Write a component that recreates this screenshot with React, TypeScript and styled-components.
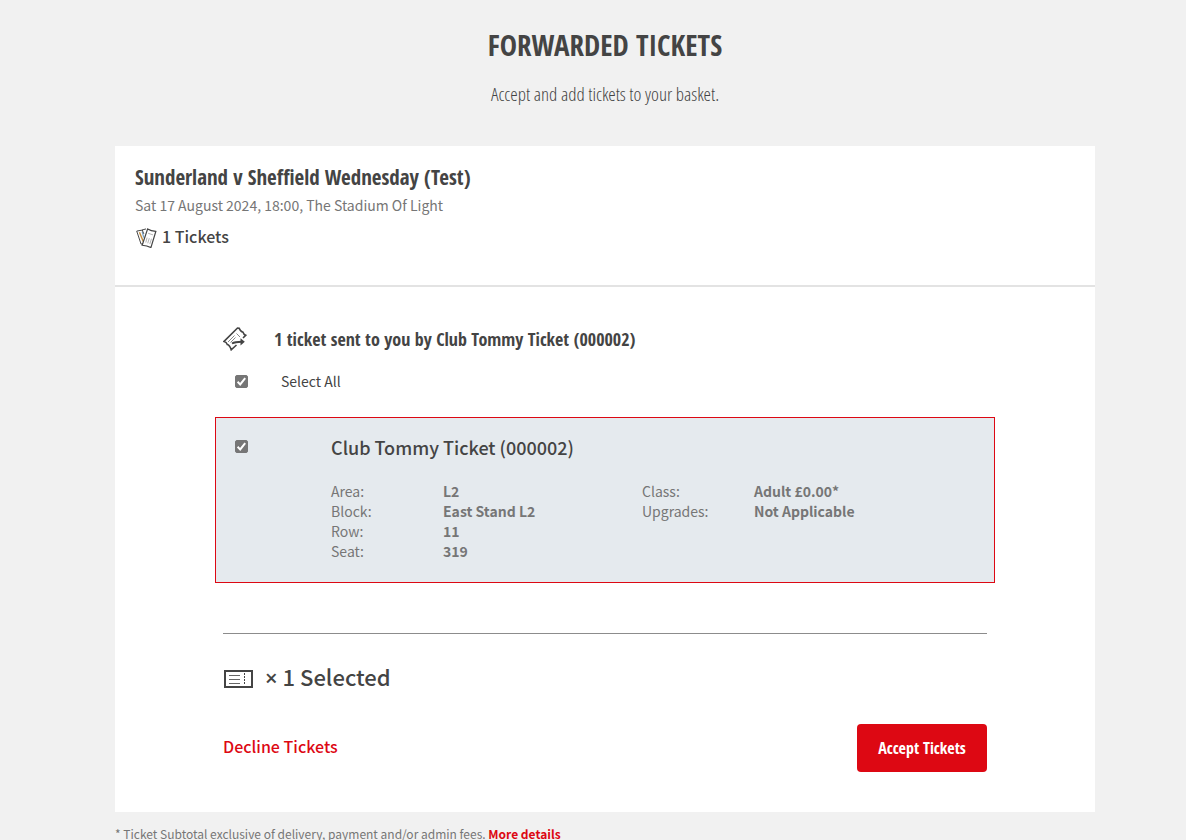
import React, { useState } from "react";
import styled, { createGlobalStyle } from "styled-components";

const ink = "#444444";
const muted = "#767676";
const red = "#dd0813";
const bodyFont = `"Noto Sans CJK JP", "Noto Sans", sans-serif`;
const displayFont = `"Open Sans Condensed", "Roboto Condensed", sans-serif`;
const lightDisplayFont = `"Open Sans Condensed Light", "Roboto Condensed", "Noto Sans Condensed", "Noto Sans CJK JP", sans-serif`;

const GlobalStyle = createGlobalStyle`
  *, *::before, *::after { box-sizing: border-box; }
  body {
    margin: 0;
    background: #f1f1f1;
    color: ${ink};
    font-family: ${bodyFont};
    font-size: 14px;
    line-height: 20px;
  }
  h1, h2, h3, h4, p, dl, dd { margin: 0; }
  svg { flex: none; }
`;

const Page = styled.main`
  padding: 24px 91px 0 115px;
`;

const Intro = styled.header`
  display: flex;
  flex-direction: column;
  align-items: center;
  gap: 16px;
  padding-bottom: 40px;
  text-align: center;
`;

const PageTitle = styled.h1`
  font-family: ${displayFont};
  font-size: 29px;
  line-height: 42px;
  font-weight: 700;
  text-transform: uppercase;
`;

const Lead = styled.p`
  font-family: ${lightDisplayFont};
  font-size: 19px;
  line-height: 24px;
`;

const Card = styled.section`
  background: #ffffff;
`;

const EventHeader = styled.header`
  padding: 15px 20px 37px;
  border-bottom: 2px solid #e3e3e3;
`;

const EventTitle = styled.h2`
  font-family: ${displayFont};
  font-size: 21px;
  line-height: 32px;
  font-weight: 700;
`;

const EventMeta = styled.p`
  color: ${muted};
  line-height: 24px;
`;

const TicketCount = styled.p`
  display: flex;
  align-items: center;
  gap: 5px;
  padding-top: 7px;
  font-size: 16px;
  line-height: 24px;
  font-weight: 500;
`;

const Transfer = styled.div`
  padding: 40px 100px;
`;

const Sender = styled.div`
  display: flex;
  align-items: center;
  gap: 26px;
  padding: 0 8px;
`;

const SenderTitle = styled.h3`
  font-family: ${displayFont};
  font-size: 18px;
  line-height: 24px;
  font-weight: 700;
`;

const SelectAll = styled.label`
  display: flex;
  align-items: center;
  gap: 33px;
  padding: 20px 20px 0;
`;

const Checkbox = styled.input`
  appearance: none;
  flex: none;
  width: 13px;
  height: 13px;
  margin: 0;
  border: 1px solid #767676;
  border-radius: 2px;
  background: #ffffff;
  cursor: pointer;

  &:checked {
    background: #767676 url("data:image/svg+xml,%3Csvg xmlns='http://www.w3.org/2000/svg' viewBox='0 0 11 11'%3E%3Cpath d='M1.6 5.8 4.2 8.4 9.2 2.2' fill='none' stroke='white' stroke-width='2'/%3E%3C/svg%3E") center / 11px 11px no-repeat;
  }
`;

const TicketBox = styled.article`
  display: grid;
  grid-template-columns: 96px 1fr;
  margin-top: 26px;
  padding: 17px 19px 21px;
  border: 1px solid ${red};
  background: #e5eaee;
`;

const TicketTick = styled.label`
  padding-top: 5px;
  line-height: 0;
`;

const TicketTitle = styled.h4`
  font-size: 18px;
  line-height: 24px;
  font-weight: 500;
`;

const Details = styled.div`
  display: grid;
  grid-template-columns: 1fr 1fr;
  align-items: start;
  padding: 22px 22px 0 0;
  color: ${muted};
`;

const DetailList = styled.dl`
  display: grid;
  grid-template-columns: 112px 1fr;
`;

const Value = styled.dd`
  font-weight: 700;
`;

const Summary = styled.div`
  display: flex;
  align-items: center;
  gap: 12px;
  margin: 50px 8px 0;
  padding-top: 26px;
  border-top: 1px solid #8c8c8c;
  font-size: 22px;
  line-height: 32px;
  font-weight: 500;
`;

const Times = styled.span`
  font-family: "Open Sans", sans-serif;
  font-weight: 600;
`;

const Actions = styled.div`
  display: flex;
  align-items: flex-start;
  justify-content: space-between;
  padding: 31px 8px 0;
`;

const TextLink = styled.a`
  color: ${red};
  font-weight: 700;
  text-decoration: none;
`;

const DeclineLink = styled(TextLink)`
  font-size: 16px;
  line-height: 44px;
  font-weight: 500;
`;

const AcceptButton = styled.button`
  min-width: 130px;
  height: 48px;
  padding: 0 16px;
  border: 0;
  border-radius: 4px;
  background: ${red};
  color: #ffffff;
  font-family: ${displayFont};
  font-size: 16px;
  font-weight: 700;
  cursor: pointer;
`;

const Footnote = styled.p`
  padding-top: 12px;
  color: ${muted};
  font-size: 12px;
`;

const TicketStackIcon = () => (
  <svg width="22" height="24" viewBox="0 -3 20 22" fill="none" stroke={ink} aria-hidden="true">
    <path d="M7 2.5 1.5 3.5 5.5 15.5 8 14.5" strokeWidth="0.9" />
    <path d="M4 4.5 7.5 13" stroke="#c08a3c" strokeWidth="1.3" />
    <path d="M6.5 4 8 9.5" stroke="#7da6c8" strokeWidth="1.2" />
    <path d="M10 1.5 6.5 2.5 8 6" strokeWidth="0.9" />
    <path d="M11.5 1.5 Q14.5 3.3 19 3.8 L14.5 18.6 Q11 17 6.5 16.5Z" fill="#fff" strokeWidth="1.1" />
    <path d="M12 5.5 16.5 7M11 9.5 9.8 14M13 10 11.6 14.7M15 10.5 13.5 15.3" stroke="#a8a8a8" strokeWidth="0.8" />
  </svg>
);

const SendTicketIcon = () => (
  <svg width="25" height="24" viewBox="0 0 25 24" fill="none" stroke={ink} aria-hidden="true">
    <path d="M20 11 22.7 8.3 Q20.5 7.5 20 5.2 Q17.5 4.6 16.2 1.2 L14.5 1 1 14.5 Q3.5 15 4.3 17.5 Q6.7 18 8.2 22.8 L13.5 18" strokeWidth="1.6" />
    <path d="M5 15 11.5 8.5M7.5 15.5 12.5 10.5M13.5 6.5 17 10" stroke="#888" strokeWidth="1" />
    <path d="M9 16.5 Q12 14.8 18.5 14.8" strokeWidth="2" />
    <path d="M17.5 11.2 21.8 14.8 17.5 18.4Z" fill={ink} stroke="none" />
  </svg>
);

const TicketIcon = () => (
  <svg width="30" height="24" viewBox="-1 -5 30 24" fill="none" stroke={ink} aria-hidden="true">
    <rect x="1" y="1" width="27" height="16" strokeWidth="2" />
    <path d="M5 5.5H16M5 9.5H16M5 13.5H16" stroke="#666" strokeWidth="1" />
    <path d="M20.5 3V15" strokeWidth="1" strokeDasharray="2 1" />
  </svg>
);

const seatDetails = [
  ["Area:", "L2"],
  ["Block:", "East Stand L2"],
  ["Row:", "11"],
  ["Seat:", "319"],
];

const priceDetails = [
  ["Class:", "Adult £0.00*"],
  ["Upgrades:", "Not Applicable"],
];

const DetailRows = ({ rows }: { rows: string[][] }) => (
  <DetailList>
    {rows.map(([label, value]) => (
      <React.Fragment key={label}>
        <dt>{label}</dt>
        <Value>{value}</Value>
      </React.Fragment>
    ))}
  </DetailList>
);

export default function App() {
  const [selected, setSelected] = useState(true);
  const toggle = () => setSelected((value) => !value);

  return (
    <>
      <GlobalStyle />
      <Page>
        <Intro>
          <PageTitle>Forwarded Tickets</PageTitle>
          <Lead>Accept and add tickets to your basket.</Lead>
        </Intro>
        <Card>
          <EventHeader>
            <EventTitle>Sunderland v Sheffield Wednesday (Test)</EventTitle>
            <EventMeta>Sat 17 August 2024, 18:00, The Stadium Of Light</EventMeta>
            <TicketCount>
              <TicketStackIcon />
              1 Tickets
            </TicketCount>
          </EventHeader>
          <Transfer>
            <Sender>
              <SendTicketIcon />
              <SenderTitle>1 ticket sent to you by Club Tommy Ticket (000002)</SenderTitle>
            </Sender>
            <SelectAll>
              <Checkbox type="checkbox" checked={selected} onChange={toggle} />
              Select All
            </SelectAll>
            <TicketBox>
              <TicketTick htmlFor="ticket-1">
                <Checkbox id="ticket-1" type="checkbox" checked={selected} onChange={toggle} aria-labelledby="ticket-1-name" />
              </TicketTick>
              <div>
                <TicketTitle id="ticket-1-name">Club Tommy Ticket (000002)</TicketTitle>
                <Details>
                  <DetailRows rows={seatDetails} />
                  <DetailRows rows={priceDetails} />
                </Details>
              </div>
            </TicketBox>
            <Summary>
              <TicketIcon />
              <span>
                <Times>×</Times> {selected ? 1 : 0} Selected
              </span>
            </Summary>
            <Actions>
              <DeclineLink href="#decline">Decline Tickets</DeclineLink>
              <AcceptButton type="button">Accept Tickets</AcceptButton>
            </Actions>
          </Transfer>
        </Card>
        <Footnote>
          * Ticket Subtotal exclusive of delivery, payment and/or admin fees.{" "}
          <TextLink href="#more-details">More details</TextLink>
        </Footnote>
      </Page>
    </>
  );
}
